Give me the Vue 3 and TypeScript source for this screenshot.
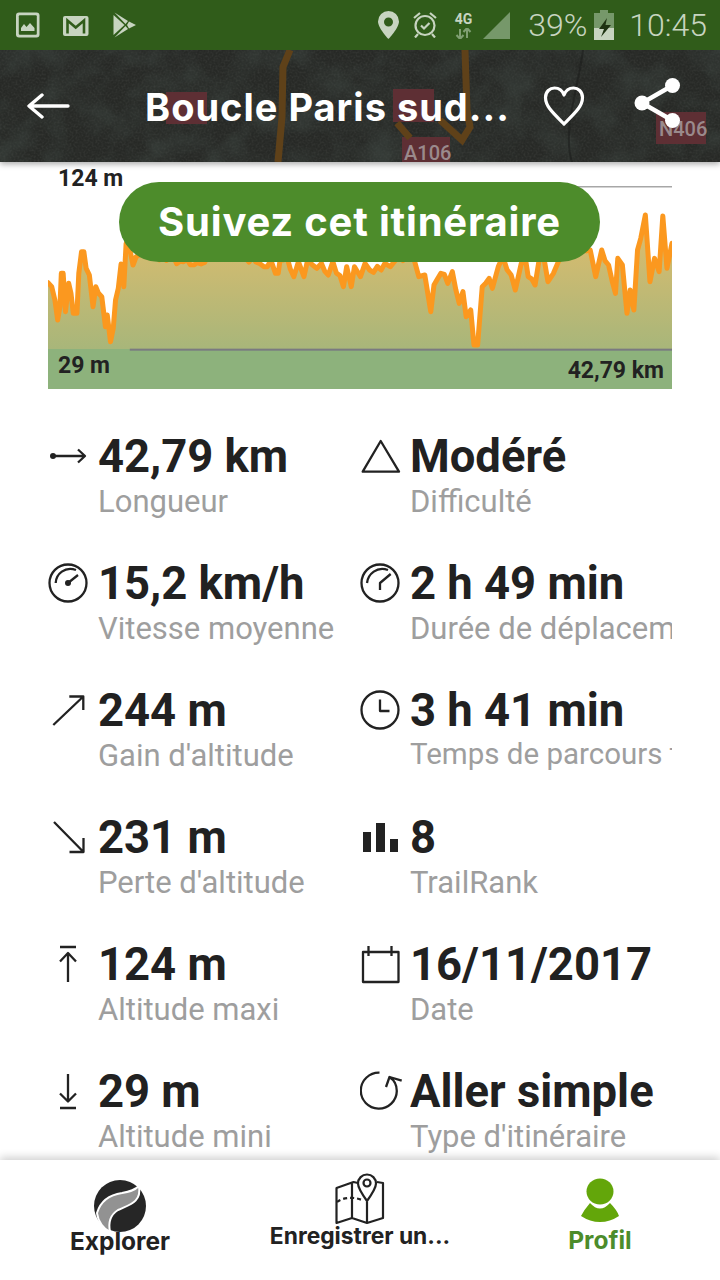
<script setup lang="ts">
interface Stat { value: string; label: string; stroke: string; fill?: string; small?: boolean }
const rowTop = (i: number) => 424 + 127 * i

const left: Stat[] = [
  { value: '42,79 km', label: 'Longueur', stroke: 'M53 456H85M78 449.5L85 456L78 462.5', fill: 'M50 456a3 3 0 1 0 6 0a3 3 0 1 0-6 0Z' },
  { value: '15,2 km/h', label: 'Vitesse moyenne', stroke: 'M49.5 583a18.5 18.5 0 1 0 37 0a18.5 18.5 0 1 0-37 0ZM55.7 583C56 574 65 566 76 570M68 583L78 575', fill: 'M65 583a3 3 0 1 0 6 0a3 3 0 1 0-6 0Z' },
  { value: '244 m', label: "Gain d'altitude", stroke: 'M53.3 725L83.3 696.5M69.3 696.5H83.3V710' },
  { value: '231 m', label: "Perte d'altitude", stroke: 'M54 822L83.5 852M69.5 852H83.5V838' },
  { value: '124 m', label: 'Altitude maxi', stroke: 'M60 947H76M68 953V982M60 961.5L68 953L76 961.5' },
  { value: '29 m', label: 'Altitude mini', stroke: 'M68 1074V1101.5M60 1093.5L68 1101.5L76 1093.5M60 1108H76' },
]
const right: Stat[] = [
  { value: 'Modéré', label: 'Difficulté', stroke: 'M380.7 441L362.7 471.7H399L380.7 441Z' },
  { value: '2 h 49 min', label: 'Durée de déplacement', stroke: 'M361.5 583a18.5 18.5 0 1 0 37 0a18.5 18.5 0 1 0-37 0ZM367 583C368 574 377 566 388 570M380 590V583L390.7 574' },
  { value: '3 h 41 min', label: 'Temps de parcours total', small: true, stroke: 'M361.5 710a18.5 18.5 0 1 0 37 0a18.5 18.5 0 1 0-37 0ZM380 699.5V711H389.5' },
  { value: '8', label: 'TrailRank', stroke: '', fill: 'M363 832h8v20h-8ZM376 823h9v29h-9ZM390 839h8v13h-8Z' },
  { value: '16/11/2017', label: 'Date', stroke: 'M363 952H398.5V982H363ZM368.5 946V956M391.5 946V956' },
  { value: 'Aller simple', label: "Type d'itinéraire", stroke: 'M379.5 1072.7A18 18 0 1 0 396.8 1091C396.8 1085 394 1080 389.5 1077M386 1087L389.5 1077L401.7 1080.7' },
]
const rows = left.map((l, i) => ({ i, cells: [{ ...l, x: 48, w: 50 }, { ...right[i], x: 360, w: 50 }] }))

const pts = [105,368,113,380,120,420,126,480,131,440,134,340,138,340,143,455,150,370,155,400,160,460,168,460,172,340,178,275,183,275,188,325,195,345,203,440,209,380,215,400,222,410,230,500,234,465,241,545,247,505,252,420,258,385,264,312,270,380,275,250,282,260,290,315,297,290,310,280,400,305,430,308,470,290,520,280,565,310,575,320,590,300,600,340,606,340,610,300,625,290,640,350,650,305,662,350,670,300,690,325,700,310,715,345,725,305,748,380,755,320,765,380,772,320,785,350,795,310,805,330,830,330,838,310,850,320,870,290,900,290,912,350,925,345,938,455,945,375,960,340,975,370,985,335,1000,430,1008,395,1015,470,1025,450,1032,555,1040,555,1050,380,1065,355,1072,385,1085,320,1095,290,1122,390,1135,310,1145,305,1150,350,1165,375,1175,290,1185,300,1193,365,1205,340,1225,280,1260,250,1285,270,1297,350,1310,270,1325,315,1340,400,1345,295,1355,315,1365,460,1372,390,1380,450,1388,270,1395,235,1405,165,1415,365,1425,295,1435,335,1443,168,1452,325,1463,250]
// Fill long segments with small, repeatable wobble so the trace reads as dense GPS data.
let line = ''
for (let k = 0; k < pts.length; k += 2) {
  const x = pts[k], y = pts[k + 1]
  if (k) {
    const px = pts[k - 2], py = pts[k - 1]
    const steps = Math.floor((x - px) / 7)
    for (let s = 1; s < steps; s++) {
      const t = s / steps
      const wob = Math.sin(x * 0.37 + s * 2.3) * 9 + Math.sin(s * 5.1 + px) * 5
      line += `L${(px + (x - px) * t).toFixed(1)} ${(py + (y - py) * t + wob).toFixed(1)}`
    }
  }
  line += (k ? 'L' : 'M') + x + ' ' + y
}
const area = line + 'L1463 567L105 567Z'
</script>

<template>
  <div class="phone">
    <div class="status">
      <svg class="ic" width="24" height="26" viewBox="16 13 24 26"><rect x="16" y="13.500" width="23.500" height="25" rx="3" fill="#c7d4c0"/><rect x="18.800" y="16.300" width="18" height="19.400" rx="1" fill="#305c1a"/><path d="M21 32V29L24 25L26.500 28L30 24L34.500 29V32Z" fill="#c7d4c0"/></svg>
      <svg class="ic gm" width="26" height="20" viewBox="63 16 26 20"><rect x="63" y="16" width="25.500" height="20" rx="2" fill="#c7d4c0"/><path d="M67.500 33.500V20.500L75.700 27.500L84 20.500V33.500" fill="none" stroke="#305c1a" stroke-width="2.600"/></svg>
      <svg class="ic pl" width="24" height="26" viewBox="113 13 24 26"><path d="M113.500 16L124.500 26L113.500 36Z" fill="#c7d4c0"/><path d="M114.500 13.500L128 22L125.500 25ZM114.500 38.500L128 30L125.500 27ZM129 22.500L136 26L129 29.500L127 26Z" fill="#c7d4c0"/></svg>
      <span class="sp"></span>
      <svg class="ic" width="21" height="28" viewBox="378 12 21 28"><path d="M388.500 12a10.500 10.500 0 0 1 10.500 10.500C399 29 388.500 40 388.500 40S378 29 378 22.500a10.500 10.500 0 0 1 10.500-10.500ZM388.500 18.500a4.500 4.500 0 1 0 0 9a4.500 4.500 0 1 0 0-9Z" fill-rule="evenodd" fill="#c7d4c0"/></svg>
      <svg class="ic al" width="24" height="26" viewBox="413 13 24 26"><g fill="none" stroke="#c7d4c0" stroke-width="2.200"><circle cx="425" cy="26.500" r="9.500"/><path d="M414 19L420 14M436 19L430 14M418 35L415 38.500M432 35L435 38.500M421 26.500L424 29.500L429.500 24"/></g></svg>
      <div class="net"><span>4G</span><svg width="21" height="11" viewBox="0 0 21 11"><path d="M7 11V1M3.500 7L7 11L10.500 7M14 0V10M10.500 4L14 0L17.500 4" fill="none" stroke="#7f9f72" stroke-width="2"/></svg></div>
      <svg class="ic sg" width="27" height="27" viewBox="483 12 27 27"><path d="M483 39L510 12V39Z" fill="#76986a"/></svg>
      <span class="pct">39%</span>
      <svg class="ic bt" width="20" height="30" viewBox="595 10 20 30"><path d="M601 10h8v3h6v15h-20v-15h6Z" fill="#76986a"/><path d="M595 28h20v12h-20Z" fill="#c7d4c0"/><path d="M608 18L600 29H605L602 37L612 25H606.500Z" fill="#1e3312"/></svg>
      <span class="time">10:45</span>
    </div>

    <header class="head">
      <svg class="map" width="720" height="112" viewBox="0 50 720 112" preserveAspectRatio="none">
        <defs>
          <filter id="sat" x="0" y="0" width="100%" height="100%">
            <feTurbulence type="fractalNoise" baseFrequency="0.5" numOctaves="3" seed="7"/>
            <feColorMatrix values="0 0 0 0 0.5  0 0 0 0 0.51  0 0 0 0 0.48  1.1 0 0 0 -0.42"/>
          </filter>
          <filter id="blot" x="0" y="0" width="100%" height="100%">
            <feTurbulence type="fractalNoise" baseFrequency="0.03" numOctaves="3" seed="11"/>
            <feColorMatrix values="0 0 0 0 0.06  0 0 0 0 0.08  0 0 0 0 0.07  1.6 0 0 0 -0.6"/>
          </filter>
        </defs>
        <rect x="0" y="50" width="720" height="112" fill="#272926"/>
        <rect x="0" y="50" width="720" height="112" filter="url(#sat)" opacity=".18"/>
        <rect x="0" y="50" width="720" height="112" filter="url(#blot)" opacity=".55"/>
        <g fill="#5e2f34">
          <rect x="166" y="92" width="41" height="32"/>
          <rect x="393" y="89" width="41" height="33"/>
          <rect x="402" y="137" width="48" height="25"/>
          <rect x="656" y="112" width="50" height="32"/>
        </g>
        <path d="M290 50L283 67L282 117L278 162M465 50L467 110L470 127L462 140L440 120M397 123L410 138" fill="none" stroke="#5f4119" stroke-width="7"/>
        <path d="M583 50C578 90 562 130 572 162" fill="none" stroke="#1c1e1c" stroke-width="2" opacity=".6"/>
        <text x="404" y="160" class="shield">A106</text>
        <text x="659" y="136" class="shield">N406</text>
      </svg>
      <svg class="hic back" width="44" height="26" viewBox="27 93 44 26"><path d="M68 106H30M42 95L29 106L42 117" fill="none" stroke="#fff" stroke-width="3.400" stroke-linecap="round" stroke-linejoin="round"/></svg>
      <h1 class="title">Boucle Paris sud...</h1>
      <svg class="hic heart" width="42" height="40" viewBox="543 86 42 40"><path d="M564 124C552 112 545.500 106 545.500 97.500C545.500 91.500 550 88 554.500 88C559 88 562.500 91 564 95C565.500 91 569 88 573.500 88C578 88 582.500 91.500 582.500 97.500C582.500 106 576 112 564 124Z" fill="none" stroke="#fff" stroke-width="3.200" stroke-linejoin="round"/></svg>
      <svg class="hic share" width="48" height="52" viewBox="634 77 48 52"><path d="M672.500 85.500L642 103L672.500 120.500" fill="none" stroke="#fff" stroke-width="4.400"/><circle cx="672.500" cy="85.500" r="7.500" fill="#fff"/><circle cx="642" cy="103" r="7.500" fill="#fff"/><circle cx="672.500" cy="120.500" r="7.500" fill="#fff"/></svg>
    </header>

    <main class="content">
      <section class="chart">
        <svg class="plot" width="624" height="227" viewBox="105 6 1358 681" preserveAspectRatio="none">
          <defs>
            <linearGradient id="grad" x1="0" y1="160" x2="0" y2="567" gradientUnits="userSpaceOnUse">
              <stop offset="0" stop-color="#e2bd6c"/>
              <stop offset="1" stop-color="#a8b67a"/>
            </linearGradient>
          </defs>
          <rect x="1200" y="79" width="263" height="3" fill="#7d7d7d"/>
          <path :d="area" fill="url(#grad)"/>
          <path :d="line" fill="none" stroke="#fb981f" stroke-width="5" stroke-linejoin="round" stroke-linecap="round" vector-effect="non-scaling-stroke"/>
          <rect x="105" y="567" width="1358" height="120" fill="#8db27c"/>
          <rect x="283" y="566" width="1180" height="6" fill="#7a7a80"/>
        </svg>
        <span class="cl max">124 m</span>
        <span class="cl min">29 m</span>
        <span class="cl dist">42,79 km</span>
        <button class="follow">Suivez cet itinéraire</button>
      </section>

      <section class="stats">
        <div v-for="row in rows" :key="row.i" class="row">
          <div v-for="c in row.cells" :key="c.label" class="cell">
            <svg class="sic" :width="c.w" height="64" :viewBox="`${c.x} ${rowTop(row.i)} ${c.w} 64`">
              <path v-if="c.fill" :d="c.fill" fill="#222"/>
              <path v-if="c.stroke" :d="c.stroke" fill="none" stroke="#222" stroke-width="2.300" stroke-linejoin="round"/>
            </svg>
            <div class="txt">
              <div class="val">{{ c.value }}</div>
              <div class="lab" :class="{ small: c.small }">{{ c.label }}</div>
            </div>
          </div>
        </div>
      </section>
    </main>

    <nav class="nav">
      <div class="tab">
        <svg width="56" height="56" viewBox="92 1178 56 56">
          <ellipse cx="120" cy="1206" rx="26" ry="26" fill="#262626"/>
          <path d="M139 1186C134 1191 128 1192 122 1193C108 1195 100 1203 97 1213C98 1222 104 1229 110 1232C108 1222 110 1215 118 1210C128 1205 142 1203 139 1186Z" fill="#929292" stroke="#fff" stroke-width="2"/>
        </svg>
        <span class="tl expl">Explorer</span>
      </div>
      <div class="tab mid">
        <svg width="52" height="52" viewBox="334 1173 52 52">
          <g fill="none" stroke="#222" stroke-width="2.200" stroke-linejoin="round">
            <path d="M358 1183L353.500 1182L336.500 1188V1223L352 1218L367 1223L383 1218V1183L377 1182M352 1182V1218M367 1202V1223"/>
            <path d="M337 1202C342 1198 352 1196 362 1200" stroke-dasharray="4 3"/>
            <path d="M367 1201C362 1194 358 1188 358 1183.500A9 9 0 0 1 376 1183.500C376 1188 372 1194 367 1201Z" fill="#fff"/>
            <circle cx="367" cy="1183" r="3.500"/>
          </g>
        </svg>
        <span class="tl enr">Enregistrer un...</span>
      </div>
      <div class="tab">
        <svg width="42" height="46" viewBox="579 1180 42 46">
          <ellipse cx="600" cy="1193.500" rx="13.500" ry="13" fill="#63a60a"/>
          <path d="M590 1205Q600 1216 610 1205Q617 1212 619 1218Q610 1224 600 1224Q590 1224 581 1218Q584 1212 590 1205Z" fill="#63a60a"/>
        </svg>
        <span class="tl prof">Profil</span>
      </div>
    </nav>
  </div>
</template>

<style scoped>
.phone { width: 720px; height: 1280px; display: flex; flex-direction: column; overflow: hidden; background: #fff; font-family: Roboto, sans-serif; }
.status { height: 50px; flex: none; background: #305c1a; display: flex; align-items: center; padding: 0 13px 0 16px; box-sizing: border-box; color: #c7d4c0; position: relative; z-index: 3; }
.ic { flex: none; display: block; }
.gm { margin-left: 23px; margin-top: 1px; }
.pl { margin-left: 24px; }
.sp { flex: 1; }
.al { margin-left: 14px; }
.net { width: 21px; margin-left: 16px; display: flex; flex-direction: column; align-items: center; font: 700 14px/14px Roboto, sans-serif; }
.net svg { margin-top: 2px; }
.sg { margin-left: 9px; }
.pct { margin-left: 18px; font: 300 32px/52px Roboto, sans-serif; }
.bt { margin-left: 7px; }
.time { margin-left: 15px; font: 300 32px/52px Roboto, sans-serif; }

.head { height: 112px; flex: none; position: relative; display: flex; align-items: center; padding: 0 39px 0 27px; box-sizing: border-box; box-shadow: 0 2px 6px rgba(0,0,0,.35); z-index: 2; }
.map { position: absolute; left: 0; top: 0; }
.shield { font: 500 20px Roboto, sans-serif; fill: #9a8a8c; }
.hic { position: relative; flex: none; display: block; }
.title { position: relative; flex: none; margin: 2px 0 0 74px; width: 398px; font: 700 38px/44px Inter, sans-serif; letter-spacing: 1px; color: #fff; white-space: nowrap; }
.share { margin-left: 49px; margin-top: -6px; }

.content { flex: 1; min-height: 0; overflow: hidden; position: relative; }
.chart { position: relative; width: 624px; height: 227px; margin-left: 48px; }
.plot { display: block; }
.cl { position: absolute; font: 700 23px/28px Roboto, sans-serif; color: #222; white-space: nowrap; }
.max { left: 10px; top: 3px; }
.min { left: 10px; top: 190px; }
.dist { right: 8px; top: 195px; }
.follow { position: absolute; left: 71px; top: 20px; width: 481px; height: 80px; border: 0; border-radius: 40px; background: #4d8c2b; color: #fff; font: 700 40px/80px Inter, sans-serif; letter-spacing: .8px; padding: 0; }

.stats { margin: 36px 0 0 48px; width: 624px; }
.row { display: flex; height: 127px; }
.cell { display: flex; flex: none; width: 312px; }
.sic { flex: none; display: block; margin-top: -1px; }
.txt { min-width: 0; flex: 1; overflow: hidden; }
.val { font: 700 45.400px/64px Roboto, sans-serif; color: #212121; white-space: nowrap; }
.lab { font: 400 31px/30px Roboto, sans-serif; color: #9e9e9e; white-space: nowrap; margin-top: -2px; }
.lab.small { font-size: 29.500px; margin-top: -4px; }

.nav { height: 120px; flex: none; display: flex; background: #fff; position: relative; z-index: 2; box-shadow: 0 -3px 8px rgba(0,0,0,.18); }
.tab { width: 240px; display: flex; flex-direction: column; align-items: center; padding-top: 18px; box-sizing: border-box; }
.tab svg { display: block; }
.mid { padding-top: 13px; }
.tl { font: 700 24.500px/28px Inter, sans-serif; color: #222; white-space: nowrap; }
.expl { margin-top: -7px; }
.enr { font-size: 22.800px; margin-top: -3px; }
.prof { color: #4c8c2b; margin-top: 2px; }
</style>
